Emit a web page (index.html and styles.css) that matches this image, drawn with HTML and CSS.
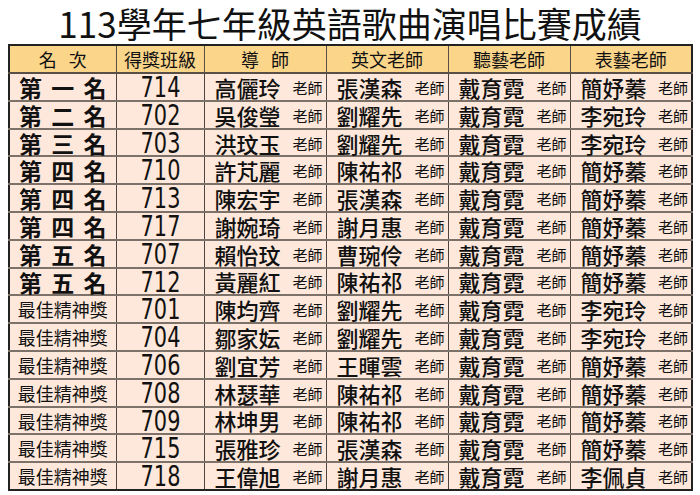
FILE: index.html
```html
<!DOCTYPE html>
<html lang="zh-Hant">
<head>
<meta charset="utf-8">
<link rel="stylesheet" href="styles.css">
</head>
<body>
<h1 class="title">113學年七年級英語歌曲演唱比賽成績</h1>
<table class="board">
<colgroup>
<col class="c-rank"><col class="c-class"><col class="c-t"><col class="c-t"><col class="c-t"><col class="c-t">
</colgroup>
<thead>
<tr><th class="spaced">名 次</th><th>得獎班級</th><th class="spaced">導 師</th><th>英文老師</th><th>聽藝老師</th><th>表藝老師</th></tr>
</thead>
<tbody>
<tr><td><div class="rank">第 一 名</div></td><td><div class="num">714</div></td><td><div class="t"><b>高儷玲</b><i>老師</i></div></td><td><div class="t"><b>張漢森</b><i>老師</i></div></td><td><div class="t"><b>戴育霓</b><i>老師</i></div></td><td><div class="t"><b>簡妤蓁</b><i>老師</i></div></td></tr>
<tr><td><div class="rank">第 二 名</div></td><td><div class="num">702</div></td><td><div class="t"><b>吳俊瑩</b><i>老師</i></div></td><td><div class="t"><b>劉耀先</b><i>老師</i></div></td><td><div class="t"><b>戴育霓</b><i>老師</i></div></td><td><div class="t"><b>李宛玲</b><i>老師</i></div></td></tr>
<tr><td><div class="rank">第 三 名</div></td><td><div class="num">703</div></td><td><div class="t"><b>洪玟玉</b><i>老師</i></div></td><td><div class="t"><b>劉耀先</b><i>老師</i></div></td><td><div class="t"><b>戴育霓</b><i>老師</i></div></td><td><div class="t"><b>李宛玲</b><i>老師</i></div></td></tr>
<tr><td><div class="rank">第 四 名</div></td><td><div class="num">710</div></td><td><div class="t"><b>許芃麗</b><i>老師</i></div></td><td><div class="t"><b>陳祐祁</b><i>老師</i></div></td><td><div class="t"><b>戴育霓</b><i>老師</i></div></td><td><div class="t"><b>簡妤蓁</b><i>老師</i></div></td></tr>
<tr><td><div class="rank">第 四 名</div></td><td><div class="num">713</div></td><td><div class="t"><b>陳宏宇</b><i>老師</i></div></td><td><div class="t"><b>張漢森</b><i>老師</i></div></td><td><div class="t"><b>戴育霓</b><i>老師</i></div></td><td><div class="t"><b>簡妤蓁</b><i>老師</i></div></td></tr>
<tr><td><div class="rank">第 四 名</div></td><td><div class="num">717</div></td><td><div class="t"><b>謝婉琦</b><i>老師</i></div></td><td><div class="t"><b>謝月惠</b><i>老師</i></div></td><td><div class="t"><b>戴育霓</b><i>老師</i></div></td><td><div class="t"><b>簡妤蓁</b><i>老師</i></div></td></tr>
<tr><td><div class="rank">第 五 名</div></td><td><div class="num">707</div></td><td><div class="t"><b>賴怡玟</b><i>老師</i></div></td><td><div class="t"><b>曹琬伶</b><i>老師</i></div></td><td><div class="t"><b>戴育霓</b><i>老師</i></div></td><td><div class="t"><b>簡妤蓁</b><i>老師</i></div></td></tr>
<tr><td><div class="rank">第 五 名</div></td><td><div class="num">712</div></td><td><div class="t"><b>黃麗紅</b><i>老師</i></div></td><td><div class="t"><b>陳祐祁</b><i>老師</i></div></td><td><div class="t"><b>戴育霓</b><i>老師</i></div></td><td><div class="t"><b>簡妤蓁</b><i>老師</i></div></td></tr>
<tr><td><div class="award">最佳精神獎</div></td><td><div class="num">701</div></td><td><div class="t"><b>陳均齊</b><i>老師</i></div></td><td><div class="t"><b>劉耀先</b><i>老師</i></div></td><td><div class="t"><b>戴育霓</b><i>老師</i></div></td><td><div class="t"><b>李宛玲</b><i>老師</i></div></td></tr>
<tr><td><div class="award">最佳精神獎</div></td><td><div class="num">704</div></td><td><div class="t"><b>鄒家妘</b><i>老師</i></div></td><td><div class="t"><b>劉耀先</b><i>老師</i></div></td><td><div class="t"><b>戴育霓</b><i>老師</i></div></td><td><div class="t"><b>李宛玲</b><i>老師</i></div></td></tr>
<tr><td><div class="award">最佳精神獎</div></td><td><div class="num">706</div></td><td><div class="t"><b>劉宜芳</b><i>老師</i></div></td><td><div class="t"><b>王暉雲</b><i>老師</i></div></td><td><div class="t"><b>戴育霓</b><i>老師</i></div></td><td><div class="t"><b>簡妤蓁</b><i>老師</i></div></td></tr>
<tr><td><div class="award">最佳精神獎</div></td><td><div class="num">708</div></td><td><div class="t"><b>林瑟華</b><i>老師</i></div></td><td><div class="t"><b>陳祐祁</b><i>老師</i></div></td><td><div class="t"><b>戴育霓</b><i>老師</i></div></td><td><div class="t"><b>簡妤蓁</b><i>老師</i></div></td></tr>
<tr><td><div class="award">最佳精神獎</div></td><td><div class="num">709</div></td><td><div class="t"><b>林坤男</b><i>老師</i></div></td><td><div class="t"><b>陳祐祁</b><i>老師</i></div></td><td><div class="t"><b>戴育霓</b><i>老師</i></div></td><td><div class="t"><b>簡妤蓁</b><i>老師</i></div></td></tr>
<tr><td><div class="award">最佳精神獎</div></td><td><div class="num">715</div></td><td><div class="t"><b>張雅珍</b><i>老師</i></div></td><td><div class="t"><b>張漢森</b><i>老師</i></div></td><td><div class="t"><b>戴育霓</b><i>老師</i></div></td><td><div class="t"><b>簡妤蓁</b><i>老師</i></div></td></tr>
<tr><td><div class="award">最佳精神獎</div></td><td><div class="num">718</div></td><td><div class="t"><b>王偉旭</b><i>老師</i></div></td><td><div class="t"><b>謝月惠</b><i>老師</i></div></td><td><div class="t"><b>戴育霓</b><i>老師</i></div></td><td><div class="t"><b>李佩貞</b><i>老師</i></div></td></tr>
</tbody>
</table>
</body>
</html>
```

FILE: styles.css
```css
html, body {
  margin: 0;
  padding: 0;
  background: #ffffff;
}
body {
  font-family: "Noto Sans CJK TC", "Noto Sans CJK SC", sans-serif;
  color: #111;
}
.title {
  margin: 0;
  height: 44px;
  line-height: 46px;
  font-size: 35px;
  font-weight: 400;
  text-align: center;
  color: #111;
  white-space: nowrap;
}
.board {
  margin-left: 8px;
  width: 683px;
  table-layout: fixed;
  border-collapse: collapse;
  border: 2px solid #222;
}
.c-rank { width: 107px; }
.c-class { width: 88px; }
.c-t { width: 122px; }
.board th {
  background: #fbd58a;
  height: 26px;
  padding: 0;
  font-size: 18px;
  font-weight: 400;
  line-height: 26px;
  border: 1px solid #5a4f46;
  border-bottom: 2px solid #5a4f46;
  white-space: nowrap;
}
.board th.spaced { word-spacing: 8px; }
.board td {
  background: #fde8db;
  height: 25.8px;
  padding: 0;
  line-height: 0;
  font-size: 0;
  vertical-align: middle;
  border-left: 1.5px solid #4d4640;
  border-right: 1.5px solid #4d4640;
  border-bottom: 2px solid #7d726a;
  white-space: nowrap;
}
.board tbody tr:last-child td { border-bottom: 2px solid #222; }
.rank,
.award,
.num,
.t {
  height: 25.8px;
}
.rank {
  text-align: center;
  font-size: 23px;
  font-weight: 700;
  line-height: 26px;
  word-spacing: 4px;
}
.award {
  text-align: center;
  font-size: 18px;
  line-height: 26px;
}
.num {
  text-align: center;
  font-family: "DejaVu Sans", sans-serif;
  font-size: 29px;
  line-height: 26px;
  transform: scaleX(0.72);
}
.t {
  display: flex;
  justify-content: space-between;
  align-items: center;
  padding: 0 3px 0 10px;
}
.t b {
  font-size: 22px;
  font-weight: 500;
  line-height: 26px;
}
.t i {
  font-style: normal;
  font-size: 15px;
  line-height: 26px;
  padding-top: 2px;
}
```
